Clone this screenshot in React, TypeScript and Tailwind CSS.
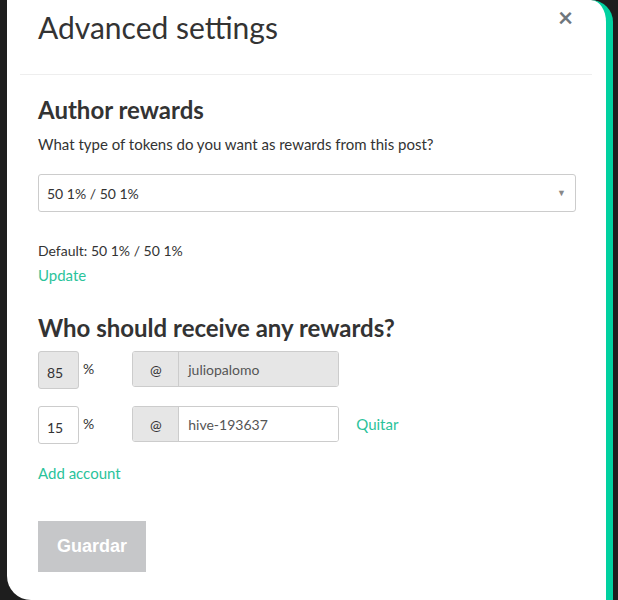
export default function App() {
  const font = { fontFamily: "Lato, 'Noto Sans', sans-serif" }
  return (
    <div className="w-[618px] h-[600px] bg-[#1e1e1e] overflow-hidden" style={font}>
      <div className="ml-[7px] w-[606px] h-[600px] bg-white rounded-tr-[22px] rounded-bl-[24px] border-r-[7px] border-[#00d1a0] text-[#333]">
        <div className="relative px-[31px] pt-[7px] pb-[27px]">
          <h1 className="text-[30px] font-normal leading-[40px]">Advanced settings</h1>
          <button className="absolute right-[33px] top-[4px] text-[26px] font-bold leading-none text-[#6f767d]">×</button>
        </div>
        <div className="ml-[13px] mr-[14px] border-t border-[#eee]"></div>

        <div className="px-[31px] pt-[20px]">
          <h2 className="text-[24px] font-bold leading-[30px]">Author rewards</h2>
          <p className="mt-[9px] text-[15px] leading-[20px]">What type of tokens do you want as rewards from this post?</p>

          <div className="mt-[20px] w-[538px] h-[38px] border border-[#ccc] rounded-[3px] flex items-center justify-between px-[8px]">
            <span className="text-[14px]">50 1% / 50 1%</span>
            <span className="text-[9px] text-[#888] mr-[1px]">▼</span>
          </div>

          <p className="mt-[29px] text-[14px] leading-[20px]">Default: 50 1% / 50 1%</p>
          <a className="block mt-[4px] text-[15px] leading-[20px] text-[#2bc39b]">Update</a>

          <h2 className="mt-[28px] text-[24px] font-bold leading-[30px]">Who should receive any rewards?</h2>

          <div className="mt-[8px] flex items-start">
            <div className="w-[41px] h-[38px] bg-[#e6e6e6] border border-[#ccc] rounded-[3px] flex items-center pl-[8px] pt-[4px] text-[14px]">85</div>
            <span className="ml-[4px] mt-[7px] text-[14px]">%</span>
            <div className="ml-[38px] w-[207px] h-[36px] flex border border-[#ccc] rounded-[3px] overflow-hidden">
              <div className="w-[46px] bg-[#e6e6e6] border-r border-[#ccc] flex items-center justify-center text-[14px]">@</div>
              <div className="flex-1 bg-[#e6e6e6] flex items-center pl-[9px] text-[14px] text-[#555]">juliopalomo</div>
            </div>
          </div>

          <div className="mt-[17px] flex items-start">
            <div className="w-[41px] h-[38px] bg-white border border-[#ccc] rounded-[3px] flex items-center pl-[8px] pt-[4px] text-[14px]">15</div>
            <span className="ml-[4px] mt-[7px] text-[14px]">%</span>
            <div className="ml-[38px] w-[207px] h-[36px] flex border border-[#ccc] rounded-[3px] overflow-hidden">
              <div className="w-[46px] bg-[#e6e6e6] border-r border-[#ccc] flex items-center justify-center text-[14px]">@</div>
              <div className="flex-1 bg-white flex items-center pl-[9px] text-[14px] text-[#555]">hive-193637</div>
            </div>
            <a className="ml-[17px] mt-[7px] text-[15px] text-[#2bc39b]">Quitar</a>
          </div>

          <a className="block mt-[19px] text-[15px] leading-[20px] text-[#2bc39b]">Add account</a>

          <button
            className="mt-[38px] w-[108px] h-[51px] bg-[#c6c7c9] text-white text-[18px] font-bold"
            style={{ fontFamily: "'Liberation Sans', Arial, sans-serif" }}
          >
            Guardar
          </button>
        </div>
      </div>
    </div>
  )
}
